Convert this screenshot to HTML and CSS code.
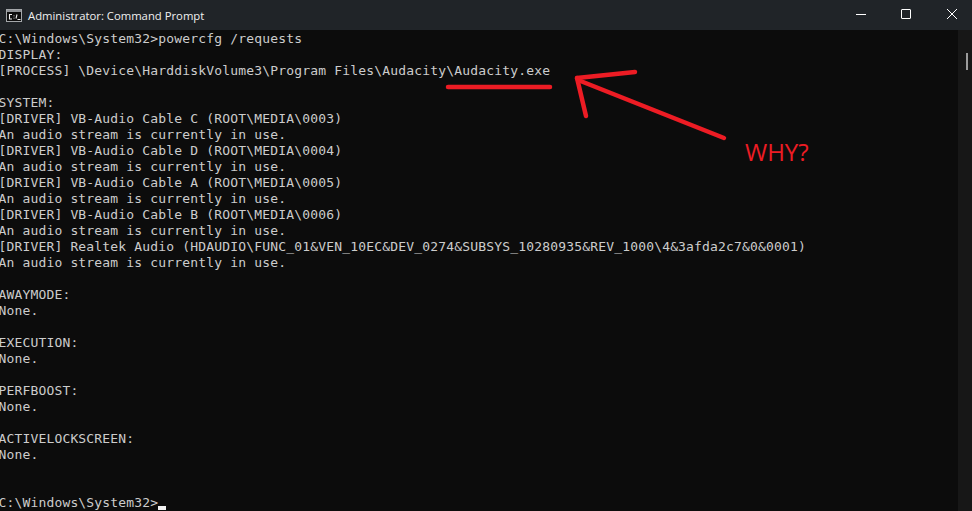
FILE: index.html
```html
<!DOCTYPE html>
<html lang="en">
<head>
<meta charset="utf-8">
<title>Administrator: Command Prompt</title>
<link rel="stylesheet" href="styles.css">
</head>
<body>
<div class="window">
  <header class="titlebar">
    <div class="title-left">
      <svg class="app-icon" width="16" height="13" viewBox="0 0 16 13">
        <rect x="0.5" y="0.5" width="15" height="12" fill="#0c0c0c" stroke="#a4a7aa"/>
        <rect x="1" y="1" width="14" height="2" fill="#8d9094"/>
        <path d="M6 5.500H3.500v4.500H6M8 6.500v.8M8 8.800v.8M10 9.500L11 5.500M11.500 10.500h3" fill="none" stroke="#f0f0f0" stroke-width="1.100"/>
      </svg>
      <span class="title-text">Administrator: Command Prompt</span>
    </div>
    <div class="controls">
      <div class="ctl"><svg width="10" height="10" viewBox="0 0 10 10"><path d="M0 5.500h10" stroke="#fff" stroke-width="1"/></svg></div>
      <div class="ctl"><svg width="10" height="10" viewBox="0 0 10 10"><rect x="0.500" y="0.500" width="9" height="9" rx="0.500" fill="none" stroke="#fff" stroke-width="1"/></svg></div>
      <div class="ctl"><svg width="10" height="10" viewBox="0 0 10 10"><path d="M0 0l10 10M10 0L0 10" stroke="#fff" stroke-width="1"/></svg></div>
    </div>
  </header>
  <div class="body">
    <pre class="console">C:\Windows\System32&gt;powercfg /requests
DISPLAY:
[PROCESS] \Device\HarddiskVolume3\Program Files\Audacity\Audacity.exe

SYSTEM:
[DRIVER] VB-Audio Cable C (ROOT\MEDIA\0003)
An audio stream is currently in use.
[DRIVER] VB-Audio Cable D (ROOT\MEDIA\0004)
An audio stream is currently in use.
[DRIVER] VB-Audio Cable A (ROOT\MEDIA\0005)
An audio stream is currently in use.
[DRIVER] VB-Audio Cable B (ROOT\MEDIA\0006)
An audio stream is currently in use.
[DRIVER] Realtek Audio (HDAUDIO\FUNC_01&amp;VEN_10EC&amp;DEV_0274&amp;SUBSYS_10280935&amp;REV_1000\4&amp;3afda2c7&amp;0&amp;0001)
An audio stream is currently in use.

AWAYMODE:
None.

EXECUTION:
None.

PERFBOOST:
None.

ACTIVELOCKSCREEN:
None.


C:\Windows\System32&gt;<span class="cursor"></span></pre>
    <div class="scrollbar"><div class="thumb"></div></div>
  </div>
  <svg class="marks" width="972" height="511" viewBox="0 0 972 511">
    <g fill="none" stroke="#ed1c24" stroke-width="4.500" stroke-linecap="round">
      <path d="M448 87H550"/>
      <path d="M577 78L635 72"/>
      <path d="M577 78L586 116"/>
      <path d="M578 80L724 138"/>
    </g>
  </svg>
  <div class="why">WHY?</div>
</div>
</body>
</html>
```
FILE: styles.css
```css
* { box-sizing: border-box; }
html, body { margin: 0; padding: 0; background: #0c0c0c; }
.window {
  position: relative;
  width: 972px;
  height: 511px;
  display: flex;
  flex-direction: column;
  overflow: hidden;
}
.titlebar {
  height: 30px;
  flex: none;
  background: #202428;
  display: flex;
  align-items: center;
  justify-content: space-between;
}
.title-left { display: flex; align-items: center; gap: 6px; padding-left: 6px; }
.app-icon { display: block; margin-top: 1px; }
.title-text {
  font-family: "Open Sans", "Noto Sans", sans-serif;
  font-size: 11.3px;
  color: #f0f0f0;
}
.controls { display: flex; margin-right: -2.5px; }
.ctl {
  width: 45.5px;
  height: 30px;
  padding-bottom: 2px;
  display: flex;
  align-items: center;
  justify-content: center;
}
.body { flex: 1; display: flex; min-height: 0; }
.console {
  flex: 1;
  margin: 0 0 0 -1.6px;
  padding: 1px 0 0 0;
  font-family: "DejaVu Sans Mono", monospace;
  font-size: 13px;
  letter-spacing: 0.17px;
  line-height: 16px;
  color: #cccccc;
  white-space: pre;
  overflow: hidden;
}
.cursor {
  display: inline-block;
  width: 8px;
  height: 4px;
  background: #f2f2f2;
  vertical-align: -3px;
}
.scrollbar {
  width: 14px;
  flex: none;
  background: #171717;
  padding: 23px 0 0 8px;
}
.thumb { width: 2px; height: 17px; background: #9b9b9b; }
.marks { position: absolute; left: 0; top: 0; pointer-events: none; }
.why {
  position: absolute;
  left: 745px;
  top: 137px;
  font-family: "Open Sans", "Noto Sans", sans-serif;
  font-size: 24px;
  line-height: 30px;
  color: #ed1c24;
}
```
